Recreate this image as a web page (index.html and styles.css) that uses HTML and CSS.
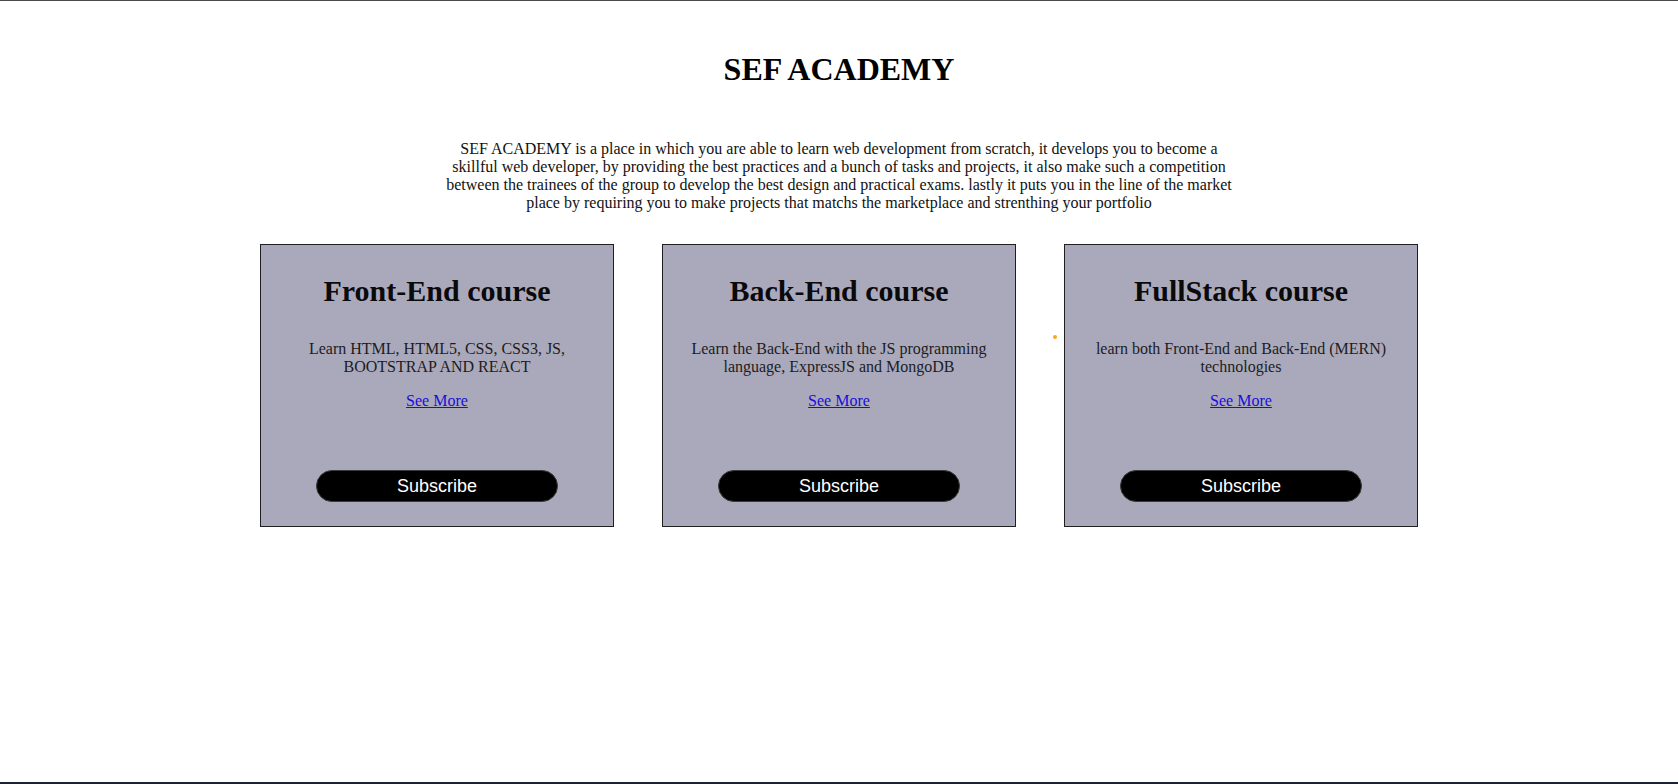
FILE: index.html
```html
<!DOCTYPE html>
<html lang="en">
<head>
<meta charset="utf-8">
<title>SEF ACADEMY</title>
<link rel="stylesheet" href="styles.css">
</head>
<body>
  <header class="hero">
    <h1 class="hero-title">SEF ACADEMY</h1>
    <p class="hero-text">SEF ACADEMY is a place in which you are able to learn web development from scratch, it develops you to become a skillful web developer, by providing the best practices and a bunch of tasks and projects, it also make such a competition between the trainees of the group to develop the best design and practical exams. lastly it puts you in the line of the market place by requiring you to make projects that matchs the marketplace and strenthing your portfolio</p>
  </header>
  <main class="courses">
    <section class="card">
      <h2 class="card-title">Front-End course</h2>
      <p class="card-text">Learn HTML, HTML5, CSS, CSS3, JS, BOOTSTRAP AND REACT</p>
      <a class="card-link" href="#">See More</a>
      <button class="card-btn" type="button">Subscribe</button>
    </section>
    <section class="card">
      <h2 class="card-title">Back-End course</h2>
      <p class="card-text">Learn the Back-End with the JS programming language, ExpressJS and MongoDB</p>
      <a class="card-link" href="#">See More</a>
      <button class="card-btn" type="button">Subscribe</button>
    </section>
    <section class="card">
      <h2 class="card-title">FullStack course</h2>
      <p class="card-text">learn both Front-End and Back-End (MERN) technologies</p>
      <a class="card-link" href="#">See More</a>
      <button class="card-btn" type="button">Subscribe</button>
    </section>
    <span class="cursor-dot"></span>
  </main>
</body>
</html>
```
FILE: styles.css
```css
* { box-sizing: border-box; }

html, body { margin: 0; padding: 0; }

body {
  min-height: 100vh;
  background: #fff;
  color: #000;
  font-family: "Liberation Serif", "Times New Roman", serif;
  font-size: 16px;
  border-top: 1px solid #4a4a4a;
  border-bottom: 2px solid #1c2133;
}

.hero {
  display: flex;
  flex-direction: column;
  align-items: center;
  padding-top: 50px;
}

.hero-title {
  margin: 0;
  font-size: 32px;
  font-weight: bold;
  line-height: normal;
}

.hero-text {
  width: 800px;
  margin: 52px 0 0;
  text-align: center;
  color: #111;
  line-height: normal;
}

.courses {
  position: relative;
  display: flex;
  justify-content: center;
  gap: 48px;
  margin-top: 32px;
}

.card {
  width: 354px;
  height: 283px;
  display: flex;
  flex-direction: column;
  align-items: center;
  padding: 29px 16px 24px;
  background: #aaa9bc;
  border: 1px solid #1f1f1f;
  text-align: center;
}

.card-title {
  margin: 0;
  font-size: 30px;
  font-weight: bold;
  line-height: normal;
  color: #0a0a0a;
}

.card-text {
  margin: 32px 0 0;
  color: #1c1c1c;
  line-height: normal;
}

.card-link {
  margin-top: 16px;
  color: #1a0dd8;
  text-decoration: underline;
}

.card-btn {
  margin-top: auto;
  width: 242px;
  height: 32px;
  border: 1px solid #3a3a3a;
  border-radius: 16px;
  background: #000;
  color: #fff;
  font-family: "Liberation Sans", Arial, sans-serif;
  font-size: 18px;
  padding: 0;
}

.cursor-dot {
  position: absolute;
  left: 1053px;
  top: 91px;
  width: 4px;
  height: 4px;
  border-radius: 50%;
  background: #ffa31a;
}
```
